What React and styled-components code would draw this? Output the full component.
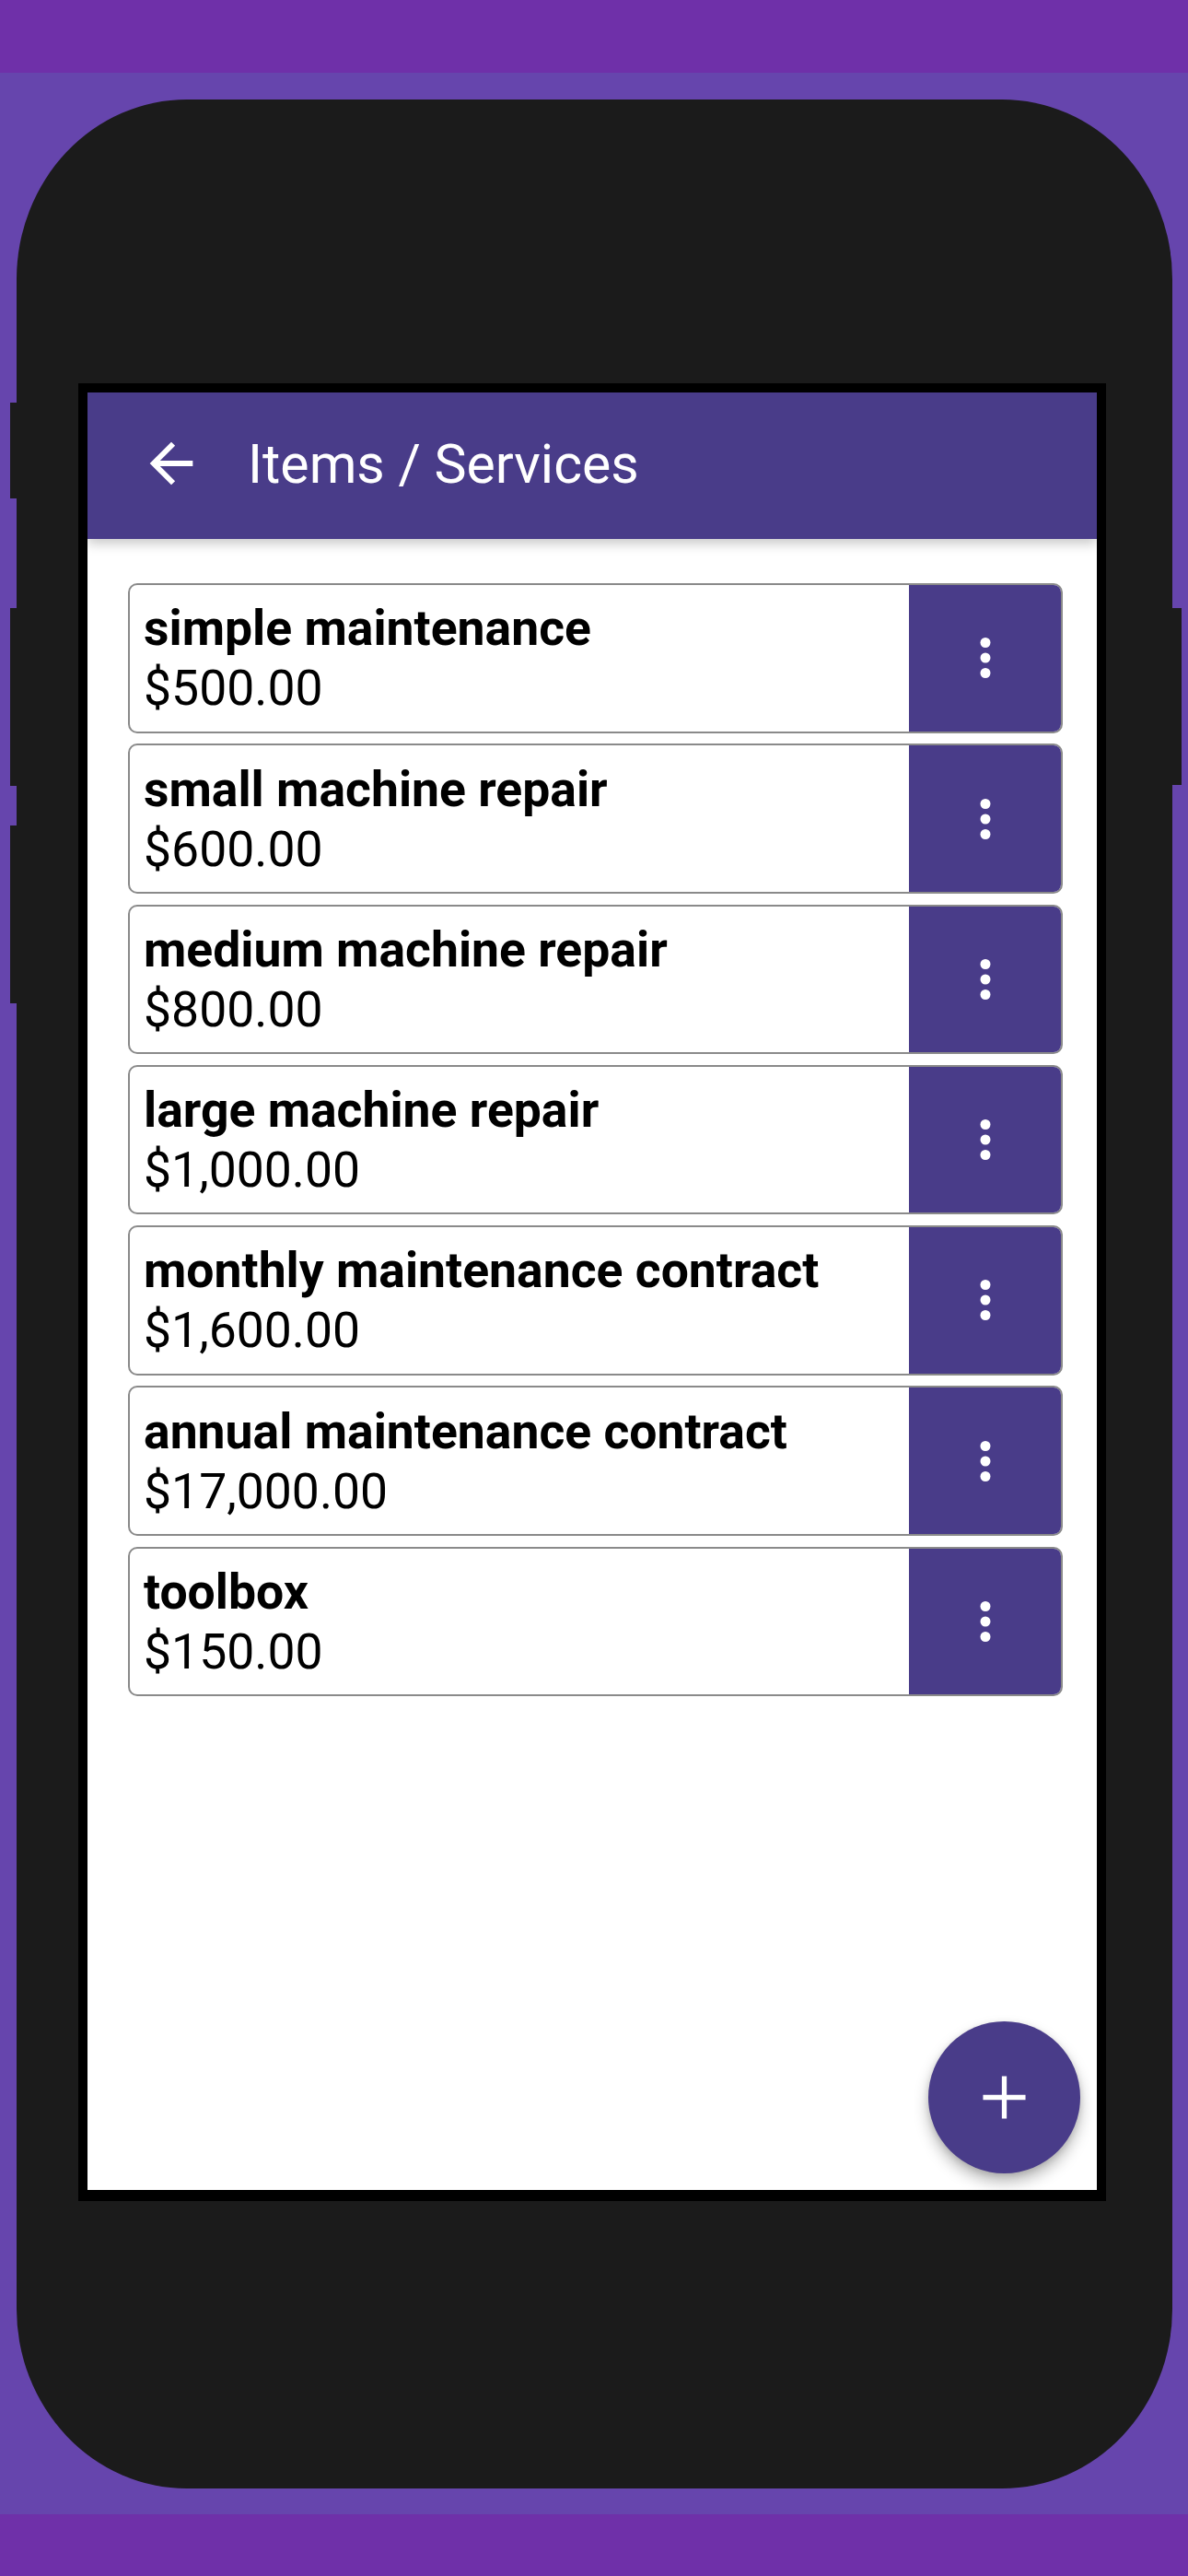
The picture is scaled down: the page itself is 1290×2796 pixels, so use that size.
import React from "react";
import styled, { createGlobalStyle } from "styled-components";

const GlobalStyle = createGlobalStyle`
    html, body{
        margin: 0;
        padding: 0;
    }
    body{
        font-family: Roboto, "Noto Sans", "Liberation Sans", sans-serif;
    }
    *{
        box-sizing: border-box;
    }
`;

const PRIMARY = '#493c89';

const Page = styled.div`
    display: flex;
    flex-direction: column;
    width: 1290px;
    height: 2796px;
    background-color: #6645ad;
`;

const Band = styled.div`
    flex-shrink: 0;
    height: ${p => p.$h}px;
    background-color: #6f30a9;
`;

const Stage = styled.div`
    flex: 1;
    padding: 29px 0 0 18px;
`;

const Phone = styled.div`
    position: relative;
    width: 1255px;
    height: 2593px;
    padding: 308px 0 0 67px;
    border-radius: 185px / 195px;
    background-color: #1b1b1b;
`;

const SideKey = styled.span`
    position: absolute;
    top: ${p => p.$top}px;
    height: ${p => p.$h}px;
    ${p => p.$right ? 'right: -10px; width: 10px;' : 'left: -7px; width: 7px;'}
    background-color: #1b1b1b;
`;

const Screen = styled.div`
    position: relative;
    display: flex;
    flex-direction: column;
    width: 1116px;
    height: 1973px;
    border: solid #000;
    border-width: 10px 10px 12px 10px;
    background-color: #fff;
    overflow: hidden;
`;

const AppBar = styled.header`
    position: relative;
    z-index: 1;
    flex-shrink: 0;
    display: flex;
    align-items: center;
    height: 159px;
    padding: 0 0 5px 56px;
    background-color: ${PRIMARY};
    box-shadow: 0px 5px 12px rgba(0,0,0,0.22);
`;

const BackButton = styled.button`
    display: flex;
    padding: 0;
    border: none;
    background: none;
    color: #fff;
    cursor: pointer;
`;

const Title = styled.h1`
    margin: 0 0 0 48px;
    font-family: Roboto, sans-serif;
    font-size: 59px;
    font-weight: 400;
    color: #fff;
    white-space: nowrap;
`;

const List = styled.div`
    display: flex;
    flex-direction: column;
    gap: 11.8px;
    padding: 48px 37px 0 44px;
`;

const Card = styled.div`
    display: flex;
    height: 162.5px;
    border: 2px solid #8a8a8a;
    border-radius: 10px;
    overflow: hidden;
`;

const Info = styled.div`
    flex: 1;
    display: flex;
    flex-direction: column;
    justify-content: center;
    padding-left: 15px;
    font-family: Roboto, sans-serif;
    font-size: 53.5px;
    line-height: 65px;
    color: #000;

    >span{
        white-space: nowrap;
        &.name{ font-weight: 700; }
        &.price{ font-weight: 400; }
    }
`;

const MenuButton = styled.button`
    flex-shrink: 0;
    display: flex;
    justify-content: center;
    align-items: center;
    width: 165px;
    padding: 0;
    border: none;
    background-color: ${PRIMARY};
    color: #fff;
    cursor: pointer;
`;

const Fab = styled.button`
    position: absolute;
    right: 18px;
    bottom: 18px;
    display: flex;
    justify-content: center;
    align-items: center;
    width: 165px;
    height: 165px;
    padding: 0;
    border: none;
    border-radius: 50%;
    background-color: ${PRIMARY};
    color: #fff;
    box-shadow: 0px 9px 16px rgba(0,0,0,0.28), 0px 2px 6px rgba(0,0,0,0.12);
    cursor: pointer;
`;

const ArrowBack = () => (
    <svg width="70" height="70" viewBox="0 0 24 24" fill="currentColor">
        <path d="M20 11H7.83l5.59-5.59L12 4l-8 8 8 8 1.41-1.41L7.83 13H20v-2z"/>
    </svg>
);

const MoreVert = () => (
    <svg width="66" height="66" viewBox="0 0 24 24" fill="currentColor">
        <circle cx="12" cy="6" r="2"/>
        <circle cx="12" cy="12" r="2"/>
        <circle cx="12" cy="18" r="2"/>
    </svg>
);

const Plus = () => (
    <svg width="79" height="79" viewBox="0 0 24 24" fill="currentColor">
        <path d="M19 12.8h-6.2V19h-1.6v-6.2H5v-1.6h6.2V5h1.6v6.2H19v1.6z"/>
    </svg>
);

const items = [
    {name: 'simple maintenance', price: 500},
    {name: 'small machine repair', price: 600},
    {name: 'medium machine repair', price: 800},
    {name: 'large machine repair', price: 1000},
    {name: 'monthly maintenance contract', price: 1600},
    {name: 'annual maintenance contract', price: 17000},
    {name: 'toolbox', price: 150},
];

const money = v => '$' + v.toLocaleString('en-US', {minimumFractionDigits: 2, maximumFractionDigits: 2});

export default function App(){
    return <>
        <GlobalStyle/>
        <Page>
            <Band $h={79}/>
            <Stage>
                <Phone>
                    <SideKey $top={329} $h={104}/>
                    <SideKey $top={552} $h={193}/>
                    <SideKey $top={788} $h={193}/>
                    <SideKey $right $top={552} $h={192}/>
                    <Screen>
                        <AppBar>
                            <BackButton aria-label="back"><ArrowBack/></BackButton>
                            <Title>Items / Services</Title>
                        </AppBar>
                        <List>
                            {items.map(it => (
                                <Card key={it.name}>
                                    <Info>
                                        <span className='name'>{it.name}</span>
                                        <span className='price'>{money(it.price)}</span>
                                    </Info>
                                    <MenuButton aria-label="more"><MoreVert/></MenuButton>
                                </Card>
                            ))}
                        </List>
                        <Fab aria-label="add"><Plus/></Fab>
                    </Screen>
                </Phone>
            </Stage>
            <Band $h={67}/>
        </Page>
    </>
}
